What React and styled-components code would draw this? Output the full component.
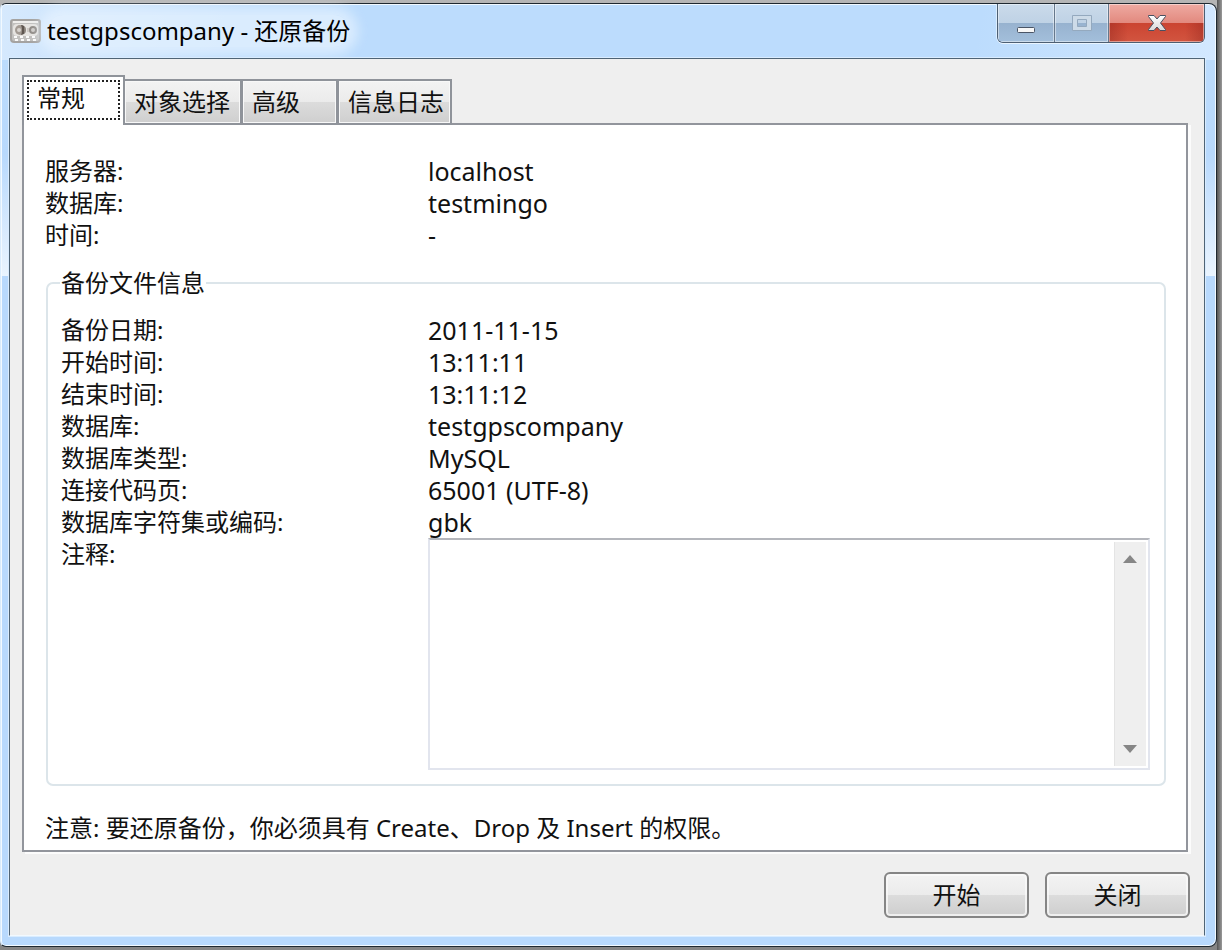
import React, { useState } from "react";
import styled, { createGlobalStyle } from "styled-components";

const Global = createGlobalStyle`
  *, *::before, *::after { box-sizing: border-box; }
  body { margin: 0; background: #858585; }
  body, button, textarea {
    font-family: "Noto Sans", "Noto Sans CJK SC", sans-serif;
    font-size: 24px;
    line-height: 32px;
    color: #111;
  }
`;

const Desktop = styled.div`
  display: flex;
  min-height: 100vh;
  padding: 3px 5px 3px 0;
  background: linear-gradient(90deg, transparent calc(100% - 5px), #555 calc(100% - 5px), #999), linear-gradient(#b5b5b5, #858585);
`;

const Window = styled.main`
  flex: 1;
  min-width: 0;
  display: flex;
  flex-direction: column;
  padding: 0 11px 10px 8px;
  border: 1px solid #1f2830;
  border-left-color: #d9ebfc;
  border-radius: 6px 8px 8px 6px;
  box-shadow: inset 0 0 0 1px #f2f9ff;
  background:
    linear-gradient(100deg, #d6e9fd 0, rgba(214, 233, 253, 0) 240px) 0 0 / 100% 56px no-repeat,
    linear-gradient(280deg, #d3e8ff 0, rgba(211, 232, 255, 0) 240px) 0 0 / 100% 56px no-repeat,
    linear-gradient(#bcdcfd 56px, #b8d9fd 150px, #eaf4fe 272px, #b8d9fd 272px);
`;

const TitleBar = styled.header`
  display: flex;
  justify-content: space-between;
  align-items: flex-start;
  height: 54px;
`;

const Caption = styled.div`
  display: flex;
  align-items: center;
  gap: 5px;
  height: 54px;
`;

const Title = styled.h1`
  margin: 0;
  color: #000;
  font-size: 24px;
  line-height: 32px;
  font-weight: 400;
  white-space: nowrap;
  border-radius: 16px;
  background: rgba(233, 244, 255, 0.65);
  box-shadow: 0 0 12px 8px rgba(233, 244, 255, 0.65);
`;

const Controls = styled.div`
  display: flex;
  height: 39px;
  border: 1px solid #4d5f73;
  border-top: 0;
  border-radius: 0 0 6px 6px;
  box-shadow: 0 1px 0 #eaf5ff, -1px 0 0 #dceeff;
  overflow: hidden;
`;

const controlFill = {
  normal: "linear-gradient(#cadaea 0, #bfd2e5 50%, #97b2cf 50%, #a3bfdb 100%)",
  close: "linear-gradient(90deg, rgba(130,30,25,.35), transparent 20%, transparent 80%, rgba(130,30,25,.35)) 0 100% / 100% 50% no-repeat, linear-gradient(#eeaaa2 0, #e2897e 50%, #cb4431 50%, #d25540 100%)",
};

const Control = styled.button`
  display: flex;
  align-items: center;
  justify-content: center;
  width: ${(p) => p.$width}px;
  padding: 0;
  border: 0;
  border-left: ${(p) => (p.$divided ? "1px solid #66788c" : "0")};
  background: ${(p) => controlFill[p.$kind]};
  box-shadow: inset 0 0 0 1px rgba(255, 255, 255, 0.45);
`;

const Client = styled.div`
  flex: 1;
  display: flex;
  flex-direction: column;
  padding: 16px 14px 17px 12px;
  border: 1px solid #4f6476;
  border-bottom-color: #f2f9ff;
  box-shadow: 0 0 0 1px #d9ecff;
  background: #efefef;
`;

const TabList = styled.div`
  display: flex;
  align-items: flex-end;
  position: relative;
  margin-bottom: -2px;
`;

const Tab = styled.button`
  width: ${(p) => p.$width}px;
  height: ${(p) => (p.$active ? 50 : 46)}px;
  padding: ${(p) => (p.$active ? "0 0 6px 13px" : "0 0 0 9px")};
  margin-right: ${(p) => (p.$active ? -2 : -1)}px;
  border: 2px solid #8f939a;
  border-bottom-width: ${(p) => (p.$active ? 0 : 2)}px;
  background: ${(p) =>
    p.$active ? "#fff" : "linear-gradient(#f3f3f3, #ebebeb 50%, #dcdcdc 50%, #cfcfcf)"};
  box-shadow: ${(p) => (p.$active ? "none" : "inset 0 0 0 1px #f8f8f8")};
  text-align: left;
  white-space: nowrap;
  outline: ${(p) => (p.$active ? "2px dotted #222" : "none")};
  outline-offset: -7px;
`;

const Panel = styled.section`
  flex: 1;
  margin-right: 2px;
  padding: 30px 20px 4px 21px;
  border: 2px solid #92959c;
  background: #fff;
  box-shadow: 3px 2px 0 #fcfcfc;
`;

const Details = styled.dl`
  display: grid;
  grid-template-columns: ${(p) => p.$label}px minmax(0, 1fr);
  margin: 0;
`;

const Term = styled.dt`
  white-space: nowrap;
`;

const Value = styled.dd`
  margin: 0;
  height: 32px;
  font-size: 25px;
  white-space: nowrap;
`;

const Group = styled.fieldset`
  min-width: 0;
  margin: 16px 0 0 1px;
  padding: 15px 14px 14px 13px;
  border: 2px solid #dce5ea;
  border-radius: 7px;
`;

const Legend = styled.legend`
  padding: 0 1px;
  margin-left: -1px;
`;

const MemoRow = styled.div`
  display: grid;
  grid-template-columns: 367px minmax(0, 1fr);
`;

const Memo = styled.div`
  display: flex;
  height: 232px;
  padding: 2px;
  border: 2px solid #e2e5ee;
  border-top-color: #b4b6bc;
`;

const MemoText = styled.textarea`
  flex: 1;
  min-width: 0;
  border: 0;
  padding: 0 4px;
  resize: none;
  outline: none;
  overflow: hidden;
  background: #fff;
`;

const ScrollBar = styled.div`
  display: flex;
  flex-direction: column;
  justify-content: space-between;
  width: 32px;
  background: #efefef;
  box-shadow: inset 1px 0 0 #e4e4e4;
`;

const ScrollButton = styled.button`
  display: flex;
  align-items: center;
  justify-content: center;
  height: 34px;
  padding: 0;
  border: 0;
  background: transparent;
`;

const Note = styled.p`
  margin: 26px 0 0;
`;

const Actions = styled.footer`
  display: flex;
  justify-content: flex-end;
  gap: 16px;
  padding-top: 20px;
`;

const Action = styled.button`
  width: 145px;
  height: 46px;
  padding: 0;
  border: 2px solid #858585;
  border-radius: 6px;
  background: linear-gradient(#f3f3f3, #ebebeb 50%, #dcdcdc 50%, #cecece);
  box-shadow: inset 0 0 0 2px rgba(250, 250, 250, 0.75);
`;

const TapeIcon = () => (
  <svg width="33" height="26" viewBox="0 0 33 26" aria-hidden="true">
    <path d="M4 2h25q2 0 2 2v17q0 3-3 3H5q-3 0-3-3V4q0-2 2-2z" fill="#c2c1bf" stroke="#a5a3a1" strokeWidth="2" />
    <path d="M4 4h25" stroke="#efeeec" strokeWidth="2" />
    <rect x="4" y="6" width="25" height="12" rx="4" fill="#e6e4e1" />
    <circle cx="11" cy="12" r="5" fill="#a39b94" />
    <path d="M12 7a5 5 0 0 1 0 10q2-5 0-10z" fill="#5f5650" />
    <circle cx="10" cy="12" r="2" fill="#d8d4cf" />
    <circle cx="24" cy="12" r="4" fill="#8f8a85" />
    <circle cx="24" cy="12" r="2" fill="#cfccc8" />
    <path d="M16 9v6M19 10v4" stroke="#b5aea7" />
    <path d="M6 22h3m3 0h3m3 0h3m3 0h3M5 19h3m3 0h3m3 0h3m3 0h3" stroke="#fafafa" strokeWidth="2" />
  </svg>
);

const MinimizeIcon = () => (
  <svg width="20" height="30" viewBox="0 0 20 30" aria-hidden="true">
    <rect x="1.5" y="19.5" width="17" height="5" rx="1" fill="#f7f7f7" stroke="#4a5566" />
  </svg>
);

const MaximizeIcon = () => (
  <svg width="20" height="18" viewBox="0 0 20 18" aria-hidden="true">
    <path d="M.5 1.500h19v15H.5zM5.500 5.500v7h9v-7z" fill="#cddbe8" fillRule="evenodd" stroke="#94a9be" />
  </svg>
);

const CloseIcon = () => (
  <svg width="20" height="18" viewBox="0 0 20 18" aria-hidden="true">
    <defs>
      <linearGradient id="cross" x1="0" y1="0" x2="0" y2="1">
        <stop offset="0" stopColor="#ffffff" />
        <stop offset="1" stopColor="#d8d8d8" />
      </linearGradient>
    </defs>
    <path d="M1.500 1.500h5.500l3 3.500 3-3.500h5.500v1L13.500 9l5 6.500v1H13l-3-3.500-3 3.500H1.500v-1L6.500 9l-5-6.500z" fill="url(#cross)" stroke="#4a5060" strokeLinejoin="round" />
  </svg>
);

const Arrow = ({ down }) => (
  <svg width="16" height="10" viewBox="0 0 16 10" aria-hidden="true">
    <path d={down ? "M1 1h14L8 9z" : "M1 9h14L8 1z"} fill="#868686" />
  </svg>
);

const tabs = [
  { name: "常规", width: 103 },
  { name: "对象选择", width: 119 },
  { name: "高级", width: 97 },
  { name: "信息日志", width: 115 },
];

const target = [
  ["服务器:", "localhost"],
  ["数据库:", "testmingo"],
  ["时间:", "-"],
];

const backup = [
  ["备份日期:", "2011-11-15"],
  ["开始时间:", "13:11:11"],
  ["结束时间:", "13:11:12"],
  ["数据库:", "testgpscompany"],
  ["数据库类型:", "MySQL"],
  ["连接代码页:", "65001 (UTF-8)"],
  ["数据库字符集或编码:", "gbk"],
];

const Rows = ({ items, label }) => (
  <Details $label={label}>
    {items.map(([term, value]) => (
      <React.Fragment key={term}>
        <Term>{term}</Term>
        <Value>{value}</Value>
      </React.Fragment>
    ))}
  </Details>
);

export default function App() {
  const [active, setActive] = useState(0);
  return (
    <Desktop lang="zh-CN">
      <Global />
      <Window>
        <TitleBar>
          <Caption>
            <TapeIcon />
            <Title>testgpscompany - 还原备份</Title>
          </Caption>
          <Controls>
            <Control $kind="normal" $width={56} aria-label="最小化"><MinimizeIcon /></Control>
            <Control $kind="normal" $width={54} $divided disabled aria-label="最大化"><MaximizeIcon /></Control>
            <Control $kind="close" $width={96} $divided aria-label="关闭窗口"><CloseIcon /></Control>
          </Controls>
        </TitleBar>
        <Client>
          <TabList role="tablist">
            {tabs.map((tab, i) => (
              <Tab
                key={tab.name}
                role="tab"
                aria-selected={i === active}
                $active={i === active}
                $width={tab.width}
                onClick={() => setActive(i)}
              >
                {tab.name}
              </Tab>
            ))}
          </TabList>
          <Panel role="tabpanel">
            <Rows items={target} label={383} />
            <Group>
              <Legend>备份文件信息</Legend>
              <Rows items={backup} label={367} />
              <MemoRow>
                <label htmlFor="memo">注释:</label>
                <Memo>
                  <MemoText id="memo" />
                  <ScrollBar>
                    <ScrollButton aria-label="向上滚动"><Arrow /></ScrollButton>
                    <ScrollButton aria-label="向下滚动"><Arrow down /></ScrollButton>
                  </ScrollBar>
                </Memo>
              </MemoRow>
            </Group>
            <Note>注意: 要还原备份，你必须具有 Create、Drop 及 Insert 的权限。</Note>
          </Panel>
          <Actions>
            <Action>开始</Action>
            <Action>关闭</Action>
          </Actions>
        </Client>
      </Window>
    </Desktop>
  );
}
